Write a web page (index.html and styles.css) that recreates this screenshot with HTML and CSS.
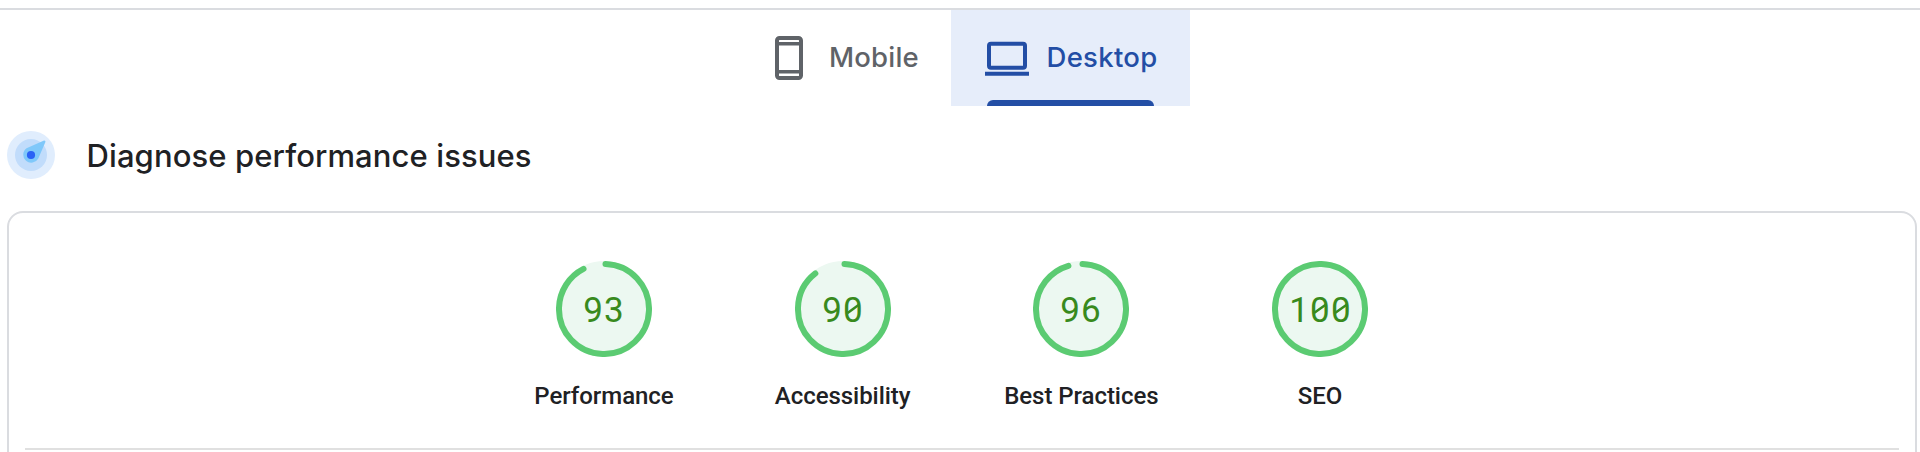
FILE: index.html
```html
<!DOCTYPE html>
<html lang="en">
<head>
  <meta charset="UTF-8">
  <meta name="viewport" content="width=device-width, initial-scale=1.0">
  <title>Diagnose performance issues</title>
  <link rel="stylesheet" href="styles.css">
</head>
<body>

<nav class="tabs">
  <div class="tab">
    <svg width="28" height="44" viewBox="0 0 28 44">
      <rect x="2" y="2" width="24" height="40" rx="2.5" fill="none" stroke="currentColor" stroke-width="4"/>
      <path d="M2 7.8h24M2 35.8h24" stroke="currentColor" stroke-width="3.4"/>
    </svg>
    <span class="mobile-text">Mobile</span>
  </div>
  <div class="tab active">
    <svg width="44" height="44" viewBox="0 0 44 44">
      <rect x="4" y="7.7" width="36" height="24" rx="2" fill="none" stroke="currentColor" stroke-width="4"/>
      <path d="M0 37.8h44" stroke="currentColor" stroke-width="4"/>
    </svg>
    <span class="desktop-text">Desktop</span>
  </div>
</nav>

<div class="heading">
  <svg width="48" height="48" viewBox="0 0 48 48">
    <circle cx="24" cy="24" r="24" fill="#e0edfd"/>
    <circle cx="24" cy="24" r="16" fill="#c1dcfb"/>
    <path d="M36.5 9.8c1.2-.8 2.4.2 1.8 1.5l-7 16.2a8 8 0 1 1-11.8-10.2z" fill="#7fc8fa"/>
    <circle cx="24" cy="24" r="4.1" fill="#2a62f5"/>
  </svg>
  <h2>Diagnose performance issues</h2>
</div>

<div class="card">
  <div class="gauges">
    <div class="gauge">
      <svg width="96" height="96" viewBox="-48 -48 96 96">
        <circle class="gauge-base" r="48"/>
        <circle class="gauge-arc" r="45" pathLength="100" stroke-dasharray="91.94 100"/>
        <text class="score" x="0" y="12.5">93</text>
      </svg>
      <span>Performance</span>
    </div>
    <div class="gauge">
      <svg width="96" height="96" viewBox="-48 -48 96 96">
        <circle class="gauge-base" r="48"/>
        <circle class="gauge-arc" r="45" pathLength="100" stroke-dasharray="88.94 100"/>
        <text class="score" x="0" y="12.5">90</text>
        <path class="slash" d="M4.6 3.9L16.2-4.5"/>
      </svg>
      <span>Accessibility</span>
    </div>
    <div class="gauge">
      <svg width="96" height="96" viewBox="-48 -48 96 96">
        <circle class="gauge-base" r="48"/>
        <circle class="gauge-arc" r="45" pathLength="100" stroke-dasharray="94.94 100"/>
        <text class="score" x="0" y="12.5">96</text>
      </svg>
      <span>Best Practices</span>
    </div>
    <div class="gauge">
      <svg width="96" height="96" viewBox="-48 -48 96 96">
        <circle class="gauge-base" r="48"/>
        <circle class="gauge-arc" r="45"/>
        <text class="score" x="0.5" y="12.5">100</text>
        <path class="slash" d="M-6 3.9L6-4.5M15 3.9L27-4.5"/>
      </svg>
      <span>SEO</span>
    </div>
  </div>
  <hr>
</div>

</body>
</html>
```

FILE: styles.css
```css
* {
  box-sizing: border-box;
}
body {
  margin: 0;
  padding-top: 8px;
  height: 452px;
  overflow: hidden;
  background-color: #fff;
  color: #202124;
  font-family: Roboto, sans-serif;
}

/* Tabs */
.tabs {
  display: flex;
  height: 98px;
  padding-left: 740px;
  border-top: 2px solid #dadce0;
  font-family: Inter, sans-serif;
  font-size: 27.5px;
  font-weight: 500;
}
.tab {
  display: flex;
  align-items: center;
  width: 211px;
  padding-left: 35px;
  color: #5f6368;
}
.tab span {
  padding-bottom: 2px;
}
.mobile-text {
  margin-left: 26px;
  letter-spacing: 0.2px;
}
.desktop-text {
  margin-left: 17.5px;
  letter-spacing: 0.3px;
}
.tab.active {
  position: relative;
  width: 239px;
  padding-left: 34px;
  background-color: #e6edfa;
  color: #234ea5;
}
.tab.active::after {
  content: "";
  position: absolute;
  left: 36px;
  right: 36px;
  bottom: 0;
  height: 6px;
  border-radius: 6px 6px 0 0;
  background-color: #234ea5;
}

/* Heading */
.heading {
  display: flex;
  align-items: center;
  height: 105px;
  padding: 0 0 7px 7px;
}
.heading h2 {
  margin: 0 0 0 31.5px;
  font-family: Inter, sans-serif;
  font-size: 31px;
  font-weight: 500;
  letter-spacing: 0.1px;
}

/* Score card */
.card {
  width: 1910px;
  height: 260px;
  margin-left: 7px;
  padding: 48px 16px 0;
  border: 2px solid #dadce0;
  border-radius: 16px;
}
.gauges {
  display: flex;
  justify-content: center;
  height: 187px;
}
.gauge {
  display: flex;
  flex-direction: column;
  align-items: center;
  width: 238.7px;
  font-size: 24px;
  font-weight: 500;
  line-height: 28px;
  letter-spacing: -0.05px;
}
.gauge svg {
  margin-bottom: 25px;
}
.gauge-base {
  fill: #ecf8f1;
}
.gauge-arc {
  fill: none;
  stroke: #5bcb72;
  stroke-width: 6px;
  stroke-linecap: round;
  transform: rotate(-88.1deg);
}
.score {
  fill: #388a1d;
  font-size: 35px;
  font-weight: 400;
  letter-spacing: 1.2px;
  text-anchor: middle;
}
.slash {
  fill: none;
  stroke: #388a1d;
  stroke-width: 2.5px;
}
hr {
  height: 2px;
  margin: 0;
  border: 0;
  background-color: #e0e0e0;
}
```
